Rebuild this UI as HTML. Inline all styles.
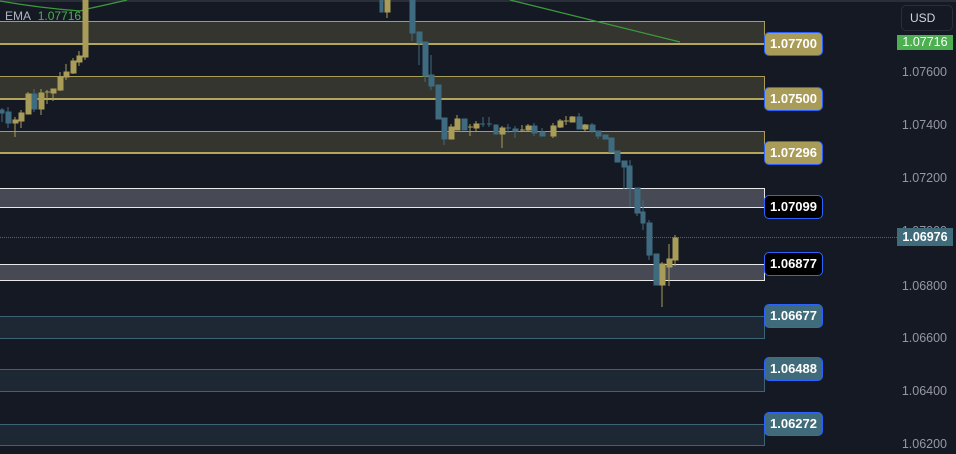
<!DOCTYPE html>
<html><head><meta charset="utf-8"><style>
body{margin:0;width:956px;height:454px;overflow:hidden;background:#151924;font-family:"Liberation Sans",sans-serif;position:relative}
.z{position:absolute;left:0;width:765px;box-sizing:border-box}
.g{background:#34352e;border:1px solid #a89c58;border-bottom:2px solid #b3a55c;border-left:none}
.w{background:#474a55;border:1.5px solid #e8e8e8;border-left:none}
.t{background:#1d2834;border:1px solid #3d6475;border-left:none}
.lb{position:absolute;left:764px;width:59px;height:24px;box-sizing:border-box;border:1.5px solid #2962ff;border-radius:5px;color:#fff;font-size:13px;font-weight:bold;line-height:21px;text-align:center}
.ax{position:absolute;right:9px;color:#9598a1;font-size:12.5px}
</style></head><body>
<div style="position:absolute;left:0;top:0;width:956px;height:2px;background:#2a2e39"></div>
<div class="z g" style="top:21px;height:24px"></div>
<div class="z g" style="top:76px;height:24px"></div>
<div class="z g" style="top:131px;height:23px"></div>
<div class="z w" style="top:188px;height:20px"></div>
<div class="z w" style="top:264px;height:17px"></div>
<div class="z t" style="top:316px;height:23px"></div>
<div class="z t" style="top:369px;height:23px"></div>
<div class="z t" style="top:424px;height:22px"></div>
<div style="position:absolute;left:0;top:237px;width:897px;border-top:1px dotted #3d6b7a"></div>
<svg width="956" height="454" style="position:absolute;left:0;top:0">
<path d="M0,1 Q40,8 80,11 L87,9 Q110,4 127,0" stroke="#3c9a3c" stroke-width="1.3" fill="none"/>
<path d="M510,0 Q600,22 680,42" stroke="#3c9a3c" stroke-width="1.3" fill="none"/>
<g fill="#3f6b80" stroke="#3f6b80" stroke-width="1">
<rect x="0" y="110" width="4" height="3"/><line x1="2" y1="108" x2="2" y2="122"/>
<rect x="6" y="112" width="5" height="11"/><line x1="8" y1="107" x2="8" y2="128"/>
<rect x="32" y="94" width="5" height="15"/><line x1="34" y1="89" x2="34" y2="112"/>
<rect x="380" y="0" width="3" height="12"/>
<rect x="410" y="0" width="5" height="33"/><line x1="412" y1="33" x2="412" y2="41"/>
<rect x="417" y="32" width="5" height="11"/><line x1="419" y1="43" x2="419" y2="65"/>
<rect x="423" y="42" width="5" height="34"/><line x1="425" y1="76" x2="425" y2="82"/>
<rect x="429" y="75" width="5" height="11"/><line x1="431" y1="55" x2="431" y2="90"/>
<rect x="436" y="85" width="5" height="34"/>
<rect x="442" y="118" width="5" height="21"/><line x1="444" y1="139" x2="444" y2="145"/>
<rect x="462" y="119" width="5" height="11"/>
<line x1="480" y1="124" x2="485" y2="124"/><line x1="483" y1="117" x2="483" y2="127"/>
<line x1="487" y1="124" x2="492" y2="124"/><line x1="489" y1="117" x2="489" y2="127"/>
<rect x="494" y="125" width="4" height="9"/>
<line x1="506" y1="128" x2="511" y2="128"/><line x1="508" y1="124" x2="508" y2="133"/>
<rect x="513" y="129" width="5" height="2"/><line x1="515" y1="126" x2="515" y2="138"/>
<rect x="532" y="126" width="5" height="7"/><line x1="534" y1="123" x2="534" y2="136"/>
<rect x="540" y="132" width="5" height="4"/><line x1="542" y1="128" x2="542" y2="136"/>
<rect x="577" y="117" width="5" height="12"/><line x1="579" y1="113" x2="579" y2="129"/>
<rect x="590" y="125" width="5" height="6"/><line x1="592" y1="123" x2="592" y2="133"/>
<rect x="596" y="131" width="5" height="5"/><line x1="598" y1="136" x2="598" y2="139"/>
<rect x="603" y="135" width="5" height="4"/>
<rect x="609" y="138" width="5" height="14"/>
<rect x="615" y="151" width="5" height="11"/>
<rect x="622" y="161" width="5" height="6"/><line x1="624" y1="167" x2="624" y2="189"/>
<rect x="627" y="166" width="5" height="22"/><line x1="630" y1="160" x2="630" y2="207"/>
<rect x="635" y="188" width="5" height="25"/><line x1="637" y1="213" x2="637" y2="216"/>
<rect x="641" y="212" width="4" height="11"/><line x1="643" y1="200" x2="643" y2="230"/>
<rect x="647" y="223" width="5" height="32"/><line x1="649" y1="220" x2="649" y2="260"/>
<rect x="654" y="254" width="5" height="31"/>
</g>
<g fill="#a89c58" stroke="#a89c58" stroke-width="1">
<rect x="13" y="120" width="5" height="3"/><line x1="15" y1="117" x2="15" y2="137"/>
<rect x="19" y="113" width="5" height="8"/><line x1="21" y1="110" x2="21" y2="128"/>
<rect x="26" y="94" width="5" height="20"/><line x1="28" y1="92" x2="28" y2="114"/>
<rect x="39" y="93" width="5" height="16"/><line x1="41" y1="89" x2="41" y2="115"/>
<line x1="45" y1="92" x2="50" y2="92"/><line x1="47" y1="90" x2="47" y2="104"/>
<rect x="51" y="89" width="5" height="4"/><line x1="53" y1="93" x2="53" y2="101"/>
<rect x="58" y="77" width="5" height="13"/><line x1="60" y1="72" x2="60" y2="91"/>
<rect x="64" y="72" width="5" height="5"/><line x1="66" y1="64" x2="66" y2="80"/>
<rect x="71" y="61" width="5" height="12"/><line x1="73" y1="58" x2="73" y2="74"/>
<rect x="77" y="56" width="5" height="6"/><line x1="79" y1="51" x2="79" y2="66"/>
<rect x="83" y="0" width="5" height="57"/><line x1="85" y1="57" x2="85" y2="60"/>
<rect x="385" y="0" width="5" height="12"/><line x1="387" y1="12" x2="387" y2="18"/>
<rect x="449" y="127" width="5" height="12"/><line x1="451" y1="124" x2="451" y2="139"/>
<rect x="455" y="119" width="5" height="11"/><line x1="457" y1="115" x2="457" y2="130"/>
<line x1="468" y1="127" x2="473" y2="127"/><line x1="470" y1="124" x2="470" y2="136"/>
<rect x="474" y="124" width="5" height="4"/><line x1="476" y1="121" x2="476" y2="131"/>
<rect x="500" y="128" width="5" height="6"/><line x1="502" y1="126" x2="502" y2="148"/>
<line x1="520" y1="130" x2="525" y2="130"/><line x1="522" y1="125" x2="522" y2="131"/>
<rect x="526" y="126" width="5" height="4"/><line x1="528" y1="124" x2="528" y2="131"/>
<rect x="551" y="126" width="5" height="10"/><line x1="553" y1="123" x2="553" y2="138"/>
<rect x="558" y="121" width="5" height="6"/><line x1="560" y1="119" x2="560" y2="128"/>
<line x1="564" y1="121" x2="569" y2="121"/><line x1="566" y1="116" x2="566" y2="125"/>
<rect x="570" y="117" width="5" height="5"/><line x1="572" y1="116" x2="572" y2="122"/>
<rect x="583" y="125" width="5" height="4"/><line x1="585" y1="124" x2="585" y2="131"/>
<rect x="660" y="264" width="5" height="21"/><line x1="662" y1="262" x2="662" y2="307"/>
<rect x="667" y="259" width="5" height="8"/><line x1="669" y1="244" x2="669" y2="286"/>
<rect x="673" y="238" width="5" height="22"/><line x1="675" y1="235" x2="675" y2="266"/>
</g>
</svg>
<div style="position:absolute;left:5px;top:9px;font-size:12px;color:#b2b5be">EMA <span style="color:#4caf50;margin-left:4px">1.07716</span></div>
<div class="lb" style="top:32px;background:#a89c58">1.07700</div>
<div class="lb" style="top:87px;background:#a89c58">1.07500</div>
<div class="lb" style="top:141px;background:#a89c58">1.07296</div>
<div class="lb" style="top:195px;background:#000">1.07099</div>
<div class="lb" style="top:252px;background:#000">1.06877</div>
<div class="lb" style="top:304px;background:#3f6b7a">1.06677</div>
<div class="lb" style="top:357px;background:#3f6b7a">1.06488</div>
<div class="lb" style="top:412px;background:#3f6b7a">1.06272</div>
<div style="position:absolute;left:901px;top:5px;width:52px;height:26px;box-sizing:border-box;border:1px solid #2a2e39;border-radius:5px;color:#d1d4dc;font-size:12px;line-height:24px;padding-left:8px">USD</div>
<div style="position:absolute;left:897px;top:35px;width:56px;height:15px;background:#4caf50;color:#fff;font-size:12.5px;line-height:15px;text-align:center">1.07716</div>
<div class="ax" style="top:65px">1.07600</div>
<div class="ax" style="top:118px">1.07400</div>
<div class="ax" style="top:171px">1.07200</div>
<div class="ax" style="top:224px">1.07000</div>
<div style="position:absolute;left:897px;top:228px;width:56px;height:18px;background:#3f6b7a;color:#fff;font-size:12.5px;line-height:18px;text-align:center;font-weight:bold">1.06976</div>
<div class="ax" style="top:279px">1.06800</div>
<div class="ax" style="top:331px">1.06600</div>
<div class="ax" style="top:384px">1.06400</div>
<div class="ax" style="top:437px">1.06200</div>
</body></html>
